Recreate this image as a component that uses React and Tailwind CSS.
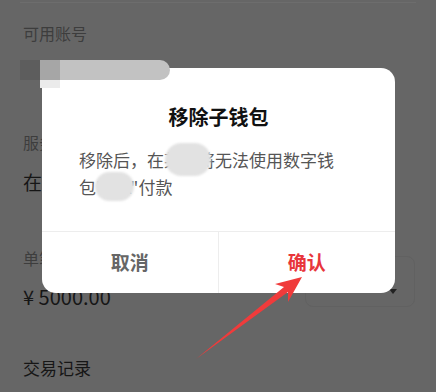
import React from 'react';

// Dimmed page behind the confirm dialog
const font = { fontFamily: '"Noto Sans CJK SC", "Noto Sans", sans-serif' };

const RemoveWalletDialog = () => (
    <div className="absolute left-[42px] top-[68px] w-[353px] h-[225px] rounded-[14px] bg-white flex flex-col">
        <div className="flex-1">
            <h2 className="pt-[35px] text-center text-[20px] leading-[28px] font-bold text-[#111]">移除子钱包</h2>
            <p className="mt-[15px] ml-[37px] w-[262px] text-[17px] leading-[27px] text-[#555]">
                移除后，在某某将无法使用数字钱包"某A"付款
            </p>
        </div>
        <div className="h-[62px] grid grid-cols-2 border-t border-[#ededed]">
            <button className="flex items-center justify-center text-[19px] font-bold text-[#666] border-r border-[#ededed]">取消</button>
            <button className="flex items-center justify-center text-[19px] font-bold text-[#e8353b]">确认</button>
        </div>
    </div>
);

const Arrow = () => (
    <svg className="absolute inset-0 pointer-events-none" width="436" height="392" viewBox="0 0 436 392">
        <polygon
            points="196,359 288,292 288,302 302,277 275,284 284,287"
            fill="#f03b3b"
        />
    </svg>
);

export default function App() {
    return (
        <div className="relative w-[436px] h-[392px] overflow-hidden bg-[#666]" style={font}>
            <div className="mx-5 mt-[2px] h-px bg-[#6d6d6d]"></div>

            {/* account */}
            <div className="h-[108px] pl-[23px] pt-[18px]">
                <p className="text-[16px] leading-[24px] text-[#3d3d3d]">可用账号</p>
            </div>

            {/* service */}
            <div className="h-[117px] pl-[23px] pt-[19px]">
                <p className="text-[16px] leading-[24px] text-[#3d3d3d]">服务商户</p>
                <p className="mt-[14px] text-[19px] leading-[28px] text-[#161616]">在线支付</p>
            </div>

            {/* limit */}
            <div className="h-[112px] flex justify-between pl-[23px] pr-[21px]">
                <div className="pt-[18px]">
                    <p className="text-[16px] leading-[24px] text-[#3d3d3d]">单笔限额</p>
                    <p className="mt-[13px] text-[20px] leading-[28px] text-[#161616]">¥ 5000.00</p>
                </div>
                <div className="mt-[28px] w-[110px] h-[51px] rounded-[8px] border border-[#616161] flex items-end justify-end pr-[17px] pb-[12px]">
                    <span className="w-0 h-0 border-x-[4px] border-x-transparent border-t-[5px] border-t-[#222]"></span>
                </div>
            </div>

            {/* records */}
            <div className="pl-[23px] pt-[15px]">
                <p className="text-[17px] leading-[26px] text-[#161616]">交易记录</p>
            </div>

            <RemoveWalletDialog />

            {/* redaction blurs */}
            <div className="absolute left-[20px] top-[60px] w-[20px] h-[20px] bg-[#5d5d5d]"></div>
            <div className="absolute left-[40px] top-[60px] w-[20px] h-[20px] bg-[#a6a6a6]"></div>
            <div className="absolute left-[40px] top-[80px] w-[20px] h-[8px] bg-[#ebebeb]"></div>
            <div className="absolute left-[60px] top-[60px] w-[110px] h-[20px] rounded-r-full bg-[#c2c2c2]"></div>
            <div className="absolute left-[165px] top-[143px] w-[46px] h-[33px] rounded-full bg-[#e2e2e2] blur-[1px]"></div>
            <div className="absolute left-[95px] top-[172px] w-[39px] h-[29px] rounded-full bg-[#e2e2e2] blur-[1px]"></div>

            <Arrow />
        </div>
    );
}
